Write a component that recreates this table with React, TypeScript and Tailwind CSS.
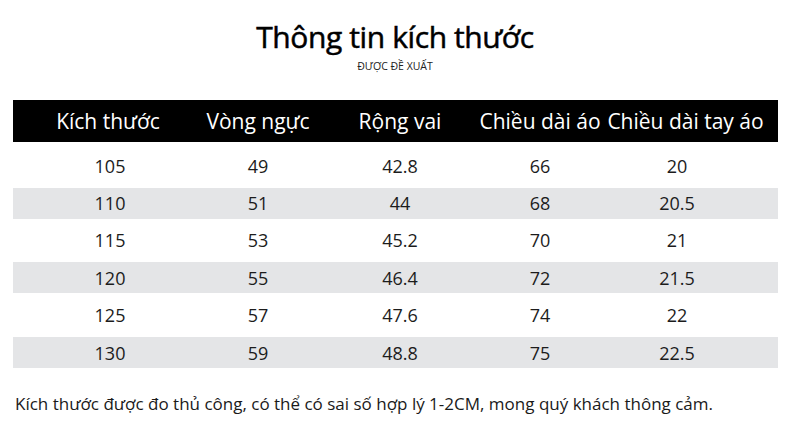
const headers = ["Kích thước", "Vòng ngực", "Rộng vai", "Chiều dài áo", "Chiều dài tay áo"];

const rows = [
  ["105", "49", "42.8", "66", "20"],
  ["110", "51", "44", "68", "20.5"],
  ["115", "53", "45.2", "70", "21"],
  ["120", "55", "46.4", "72", "21.5"],
  ["125", "57", "47.6", "74", "22"],
  ["130", "59", "48.8", "75", "22.5"],
];

export default function App() {
  return (
    <div
      className="w-[790px] h-[435px] bg-white text-[#1c1c1c] overflow-hidden"
      style={{ fontFamily: '"Open Sans", "Noto Sans", sans-serif' }}
    >
      {/* Title */}
      <div className="flex flex-col items-center pt-[17px]">
        <h1 className="text-[30px] leading-[40px] font-normal tracking-[-0.4px] text-black [-webkit-text-stroke:0.5px_black]">
          Thông tin kích thước
        </h1>
        <div className="text-[10.5px] leading-[12px] mt-[3px] text-[#222]">ĐƯỢC ĐỀ XUẤT</div>
      </div>

      {/* Table */}
      <div className="mx-[13px] w-[765px] mt-[28px]">
        <div className="grid grid-cols-[190px_110px_174px_106px_185px] h-[42px] bg-black text-white items-center">
          {headers.map((h, i) => (
            <div key={i} className="flex justify-center whitespace-nowrap text-[21px] leading-none">
              {h}
            </div>
          ))}
        </div>

        <div className="mt-[5px]">
          {rows.map((row, r) => (
            <div key={r} className="h-[37.4px] flex items-center">
              <div
                className={`grid grid-cols-[194px_102px_182px_98px_176px] w-full h-[31px] items-center ${
                  r % 2 === 1 ? "bg-[#e4e5e7]" : ""
                }`}
              >
                {row.map((v, i) => (
                  <div key={i} className="flex justify-center text-[18px] leading-none">
                    {v}
                  </div>
                ))}
              </div>
            </div>
          ))}
        </div>
      </div>

      {/* Note */}
      <p className="ml-[15px] mt-[22px] text-[17px] leading-[22px] text-[#1a1a1a]">
        Kích thước được đo thủ công, có thể có sai số hợp lý 1-2CM, mong quý khách thông cảm.
      </p>
    </div>
  );
}
